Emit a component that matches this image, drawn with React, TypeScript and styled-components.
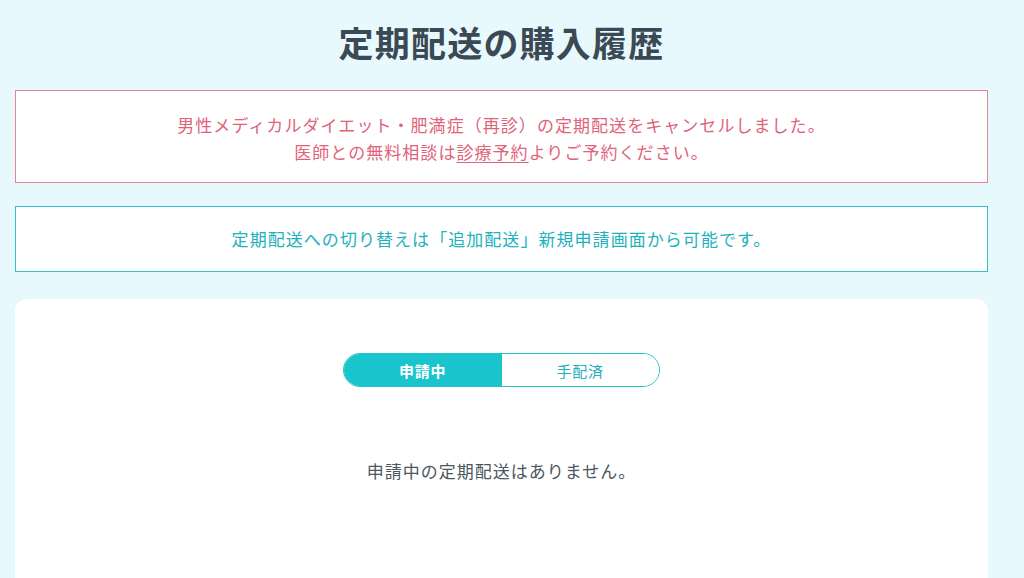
import React, { useState } from 'react';
import styled, { createGlobalStyle, css } from 'styled-components';

const GlobalStyle = createGlobalStyle`
  html, body {
    margin: 0;
    padding: 0;
    background: #e8f9fd;
    font-family: "Noto Sans CJK JP", "Noto Sans", sans-serif;
    color: #3d4a55;
  }
`;

const Page = styled.div`
  width: 973px;
  padding: 0 0 0 15px;
  display: flex;
  flex-direction: column;
`;

const Title = styled.h1`
  margin: 18px 0 0;
  height: 72px;
  font-size: 35px;
  font-weight: 700;
  letter-spacing: 1.2px;
  line-height: 48px;
  text-align: center;
  color: #3b4955;
`;

const Notice = styled.div<{ tone: 'alert' | 'info' }>`
  background: #ffffff;
  border: 1px solid;
  text-align: center;
  font-size: 17px;
  letter-spacing: 1.05px;
  box-sizing: border-box;
  display: flex;
  flex-direction: column;
  justify-content: center;
  ${({ tone }) =>
    tone === 'alert'
      ? css`
          border-color: #e28594;
          color: #e0637a;
          height: 93px;
          line-height: 27px;
          padding-top: 2px;
        `
      : css`
          border-color: #35c0c9;
          color: #22b1bc;
          height: 66px;
          line-height: 24px;
        `}
`;

const Link = styled.a`
  color: inherit;
  text-decoration: underline;
  text-underline-offset: 3px;
`;

const Gap = styled.div<{ h: number }>`
  height: ${({ h }) => h}px;
`;

const Card = styled.section`
  background: #ffffff;
  border-radius: 12px 12px 0 0;
  height: 290px;
  display: flex;
  flex-direction: column;
  align-items: center;
  padding-top: 54px;
  box-sizing: border-box;
`;

const Toggle = styled.div`
  display: flex;
  width: 317px;
  height: 34px;
  box-sizing: border-box;
  border: 1.5px solid #1fc3cc;
  border-radius: 17px;
  overflow: hidden;
`;

const ToggleButton = styled.button<{ active: boolean }>`
  flex: 1;
  border: none;
  margin: 0;
  padding: 0;
  font-family: inherit;
  font-size: 15px;
  letter-spacing: 0.05em;
  cursor: pointer;
  ${({ active }) =>
    active
      ? css`
          background: #1ac4cd;
          color: #ffffff;
          font-weight: 700;
        `
      : css`
          background: #ffffff;
          color: #22b1bc;
          font-weight: 400;
        `}
`;

const Empty = styled.p`
  margin: 71px 0 0;
  font-size: 17px;
  letter-spacing: 1px;
  color: #4d5760;
`;

const tabs = ['申請中', '手配済'];

export default function App() {
  const [tab, setTab] = useState(0);
  return (
    <>
      <GlobalStyle />
      <Page>
        <Title>定期配送の購入履歴</Title>
        <Notice tone="alert">
          <div>男性メディカルダイエット・肥満症（再診）の定期配送をキャンセルしました。</div>
          <div>
            医師との無料相談は<Link href="#">診療予約</Link>よりご予約ください。
          </div>
        </Notice>
        <Gap h={23} />
        <Notice tone="info">
          定期配送への切り替えは「追加配送」新規申請画面から可能です。
        </Notice>
        <Gap h={27} />
        <Card>
          <Toggle>
            {tabs.map((t, i) => (
              <ToggleButton key={t} active={tab === i} onClick={() => setTab(i)}>
                {t}
              </ToggleButton>
            ))}
          </Toggle>
          <Empty>{tabs[tab]}の定期配送はありません。</Empty>
        </Card>
      </Page>
    </>
  );
}
